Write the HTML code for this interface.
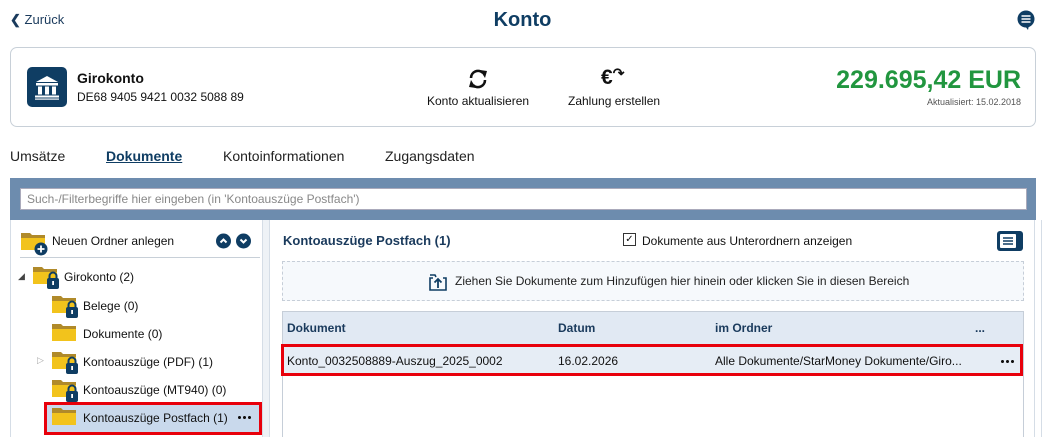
<!DOCTYPE html><html><head><meta charset="utf-8"><style>
*{box-sizing:border-box;margin:0;padding:0}
body{width:1045px;height:437px;overflow:hidden;background:#fff;font-family:"Liberation Sans",sans-serif;color:#111;position:relative}
.a{position:absolute;white-space:nowrap}
.d{position:absolute;width:15px;height:3px;background:radial-gradient(circle,#111 1.4px,transparent 1.6px) 0 0/5px 3px repeat-x}
</style></head><body>
<div class="a" style="left:10px;top:12px;font-size:13px;color:#1a3a5c"><span style="font-weight:bold">&#10094;</span> Zurück</div>
<div class="a" style="left:0;width:1045px;text-align:center;top:9px;font-size:20px;font-weight:bold;color:#0f3d63">Konto</div>
<svg class="a" style="left:1016px;top:10px" width="20" height="20" viewBox="0 0 20 20"><circle cx="10" cy="9" r="8.5" fill="#0f3d63"/><path d="M9 16 L12 20 L13 15Z" fill="#0f3d63"/><path d="M5.5 6h9M5.5 9h9M5.5 12h9" stroke="#fff" stroke-width="1.6"/></svg>
<div class="a" style="left:10px;top:47px;width:1026px;height:80px;border:1px solid #c8d0d8;border-radius:7px"></div>
<div class="a" style="left:27px;top:67px;width:40px;height:40px;background:#0f3d63;border-radius:5px"></div>
<svg class="a" style="left:27px;top:67px" width="40" height="40" viewBox="0 0 40 40"><path d="M9 15 L20 9 L31 15Z" fill="#fff"/><rect x="9" y="16" width="22" height="2.5" fill="#fff"/><rect x="11" y="19.5" width="4" height="8" fill="#fff"/><rect x="18" y="19.5" width="4" height="8" fill="#fff"/><rect x="25" y="19.5" width="4" height="8" fill="#fff"/><rect x="8" y="28.5" width="24" height="2" fill="#fff"/><rect x="8" y="31.5" width="24" height="1.2" fill="#fff"/></svg>
<div class="a" style="left:77px;top:70px;font-size:14px;font-weight:bold">Girokonto</div>
<div class="a" style="left:77px;top:90px;font-size:12px">DE68 9405 9421 0032 5088 89</div>
<svg class="a" style="left:466px;top:68px" width="24" height="22" viewBox="0 0 24 22"><path d="M5 10a7 7 0 0 1 12-5" fill="none" stroke="#111" stroke-width="2.6"/><path d="M19 12a7 7 0 0 1-12 5" fill="none" stroke="#111" stroke-width="2.6"/><path d="M14 2 L21 3 L19 10Z" fill="#111"/><path d="M10 20 L3 19 L5 12Z" fill="#111"/></svg>
<div class="a" style="left:427px;top:94px;font-size:12px">Konto aktualisieren</div>
<div class="a" style="left:601px;top:66px;font-size:21px;font-weight:bold">€<span style="font-size:14px;position:relative;top:-6px">&#8631;</span></div>
<div class="a" style="left:568px;top:94px;font-size:12px">Zahlung erstellen</div>
<div class="a" style="right:24px;top:66px;font-size:25px;font-weight:bold;color:#21963f">229.695,42 EUR</div>
<div class="a" style="right:24px;top:97px;font-size:9px;color:#555">Aktualisiert: 15.02.2018</div>
<div class="a" style="left:10px;top:148px;font-size:14px;color:#222">Umsätze</div>
<div class="a" style="left:106px;top:148px;font-size:14px;font-weight:bold;color:#0f3d63;text-decoration:underline">Dokumente</div>
<div class="a" style="left:223px;top:148px;font-size:14px;color:#222">Kontoinformationen</div>
<div class="a" style="left:385px;top:148px;font-size:14px;color:#222">Zugangsdaten</div>
<div class="a" style="left:10px;top:178px;width:1026px;height:42px;background:#6d8cae"></div>
<div class="a" style="left:20px;top:188px;width:1007px;height:22px;background:#fff;border:1px solid #aab;font-size:12px;color:#888;padding:3px 6px">Such-/Filterbegriffe hier eingeben (in 'Kontoauszüge Postfach')</div>
<div class="a" style="left:10px;top:220px;width:1px;height:217px;background:#d5dde6"></div>
<div class="a" style="left:262px;top:220px;width:8px;height:217px;background:#eef2f6;border-left:1px solid #d5dde6;border-right:1px solid #d5dde6"></div>
<div class="a" style="left:1034px;top:220px;width:1px;height:217px;background:#d5dde6"></div>
<div class="a" style="left:1041px;top:220px;width:1px;height:217px;background:#d5dde6"></div>
<div class="a" style="left:20px;top:257px;width:240px;height:1px;background:#c8d0d8"></div>
<svg width="0" height="0" style="position:absolute"><defs>
<g id="f"><path d="M0 2h9l2 2h13v15H0Z" fill="#b08a2a"/><path d="M0 7h24v12H0Z" fill="#f2c31c"/></g>
<g id="l"><path d="M16.5 14v-3a3.5 3.5 0 0 1 7 0v3" fill="none" stroke="#0f3d63" stroke-width="2"/><rect x="14" y="13" width="12" height="11" rx="2" fill="#0f3d63"/><rect x="19.2" y="16" width="1.8" height="4" fill="#fff"/></g></defs></svg>
<svg class="a" style="left:21px;top:231px" width="30" height="26"><use href="#f"/><circle cx="20" cy="18" r="6.5" fill="#0f3d63"/><path d="M20 14.5v7M16.5 18h7" stroke="#fff" stroke-width="1.8"/></svg>
<div class="a" style="left:52px;top:234px;font-size:12px">Neuen Ordner anlegen</div>
<svg class="a" style="left:216px;top:233px" width="36" height="16"><circle cx="7.5" cy="8" r="7.5" fill="#0f3d63"/><path d="M4.5 9.5 L7.5 6.5 L10.5 9.5" fill="none" stroke="#fff" stroke-width="2"/><circle cx="27.5" cy="8" r="7.5" fill="#0f3d63"/><path d="M24.5 6.5 L27.5 9.5 L30.5 6.5" fill="none" stroke="#fff" stroke-width="2"/></svg>
<div class="a" style="left:18px;top:271px;font-size:9px;color:#444">&#9698;</div>
<svg class="a" style="left:33px;top:265px" width="28" height="25"><use href="#f"/><use href="#l"/></svg>
<div class="a" style="left:64px;top:270px;font-size:12px">Girokonto (2)</div>
<svg class="a" style="left:52px;top:294px" width="28" height="25"><use href="#f"/><use href="#l"/></svg>
<div class="a" style="left:83px;top:299px;font-size:12px">Belege (0)</div>
<svg class="a" style="left:52px;top:322px" width="28" height="25"><use href="#f"/></svg>
<div class="a" style="left:83px;top:327px;font-size:12px">Dokumente (0)</div>
<div class="a" style="left:37px;top:355px;font-size:9px;color:#aaa">&#9655;</div>
<svg class="a" style="left:52px;top:350px" width="28" height="25"><use href="#f"/><use href="#l"/></svg>
<div class="a" style="left:83px;top:355px;font-size:12px">Kontoauszüge (PDF) (1)</div>
<svg class="a" style="left:52px;top:378px" width="28" height="25"><use href="#f"/><use href="#l"/></svg>
<div class="a" style="left:83px;top:383px;font-size:12px">Kontoauszüge (MT940) (0)</div>
<div class="a" style="left:44px;top:402px;width:218px;height:33px;border:3px solid #e8000b;background:#c9d9ec"></div>
<svg class="a" style="left:52px;top:406px" width="28" height="25"><use href="#f"/></svg>
<div class="a" style="left:83px;top:411px;font-size:12px">Kontoauszüge Postfach (1)</div>
<div class="d" style="left:237px;top:416px"></div>
<div class="a" style="left:283px;top:233px;font-size:13px;font-weight:bold;color:#1a3a5c">Kontoauszüge Postfach (1)</div>
<div class="a" style="left:623px;top:233px;width:13px;height:13px;border:1px solid #333;font-size:10px;line-height:11px;text-align:center">&#10003;</div>
<div class="a" style="left:642px;top:234px;font-size:12px">Dokumente aus Unterordnern anzeigen</div>
<svg class="a" style="left:997px;top:231px" width="26" height="20"><rect width="26" height="20" rx="3" fill="#0f3d63"/><rect x="3" y="3" width="16" height="14" rx="1" fill="#fff"/><path d="M6 7h10M6 10h10M6 13h10" stroke="#0f3d63" stroke-width="1.5"/></svg>
<div class="a" style="left:282px;top:261px;width:742px;height:40px;border:1px dashed #c6ced8;background:#f6f9fc"></div>
<svg class="a" style="left:428px;top:271px" width="20" height="20"><path d="M5 7H2v12h16V7h-3" fill="none" stroke="#0f3d63" stroke-width="1.6"/><path d="M2 4h5l1 2" fill="none" stroke="#0f3d63" stroke-width="1.6"/><path d="M10 17V8M6.5 11.5 L10 8 L13.5 11.5" fill="none" stroke="#0f3d63" stroke-width="1.8"/></svg>
<div class="a" style="left:455px;top:274px;font-size:12px;color:#222">Ziehen Sie Dokumente zum Hinzufügen hier hinein oder klicken Sie in diesen Bereich</div>
<div class="a" style="left:282px;top:311px;width:742px;height:126px;border:1px solid #c6ced8;border-bottom:none"></div>
<div class="a" style="left:283px;top:312px;width:740px;height:33px;background:#e1e9f3"></div>
<div class="a" style="left:287px;top:321px;font-size:12px;font-weight:bold;color:#1a3a5c">Dokument</div>
<div class="a" style="left:558px;top:321px;font-size:12px;font-weight:bold;color:#1a3a5c">Datum</div>
<div class="a" style="left:715px;top:321px;font-size:12px;font-weight:bold;color:#1a3a5c">im Ordner</div>
<div class="a" style="left:975px;top:321px;font-size:12px;font-weight:bold;color:#1a3a5c">...</div>
<div class="a" style="left:281px;top:344px;width:742px;height:32px;border:3px solid #e8000b;background:#e6edf5"></div>
<div class="a" style="left:287px;top:354px;font-size:12px">Konto_0032508889-Auszug_2025_0002</div>
<div class="a" style="left:558px;top:354px;font-size:12px">16.02.2026</div>
<div class="a" style="left:715px;top:354px;font-size:12px">Alle Dokumente/StarMoney Dokumente/Giro...</div>
<div class="d" style="left:1000px;top:360px"></div>
</body></html>
